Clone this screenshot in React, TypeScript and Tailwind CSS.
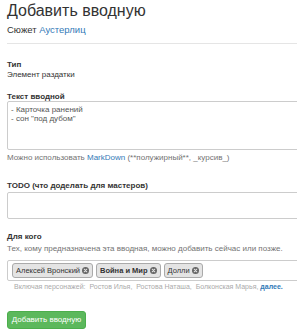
function CloseDot() {
  return (
    <svg width="7" height="7" viewBox="0 0 10 10" className="shrink-0">
      <circle cx="5" cy="5" r="5" fill="#666" />
      <path d="M3.2 3.2 L6.8 6.8 M6.8 3.2 L3.2 6.8" stroke="#e4e4e4" strokeWidth="1.5" strokeLinecap="round" />
    </svg>
  );
}

function Tag({ label, bold }: { label: string; bold?: boolean }) {
  return (
    <span className="flex items-center gap-[2px] h-[15px] px-[3px] bg-[#e4e4e4] border border-[#aaa] rounded-[3px] text-[7.5px] text-[#333] whitespace-nowrap">
      <span className={bold ? "font-bold" : ""}>{label}</span>
      <CloseDot />
    </span>
  );
}

export default function App() {
  return (
    <div className="w-[297px] h-[333px] overflow-hidden bg-white text-[#333] font-['Liberation_Sans',Arial,sans-serif]">
      <div className="w-[320px] px-[7px]">
        {/* заголовок */}
        <h1 className="text-[16px] leading-[20px] pt-[1px] font-normal text-[#333]">Добавить вводную</h1>
        <div className="mt-[3px] text-[9.5px] leading-[12px]">
          Сюжет <a className="text-[#337ab7]">Аустерлиц</a>
        </div>
        <div className="mt-[7px] border-t border-[#e5e5e5]" />

        {/* тип */}
        <div className="mt-[16px] text-[8px] leading-[10px] font-bold">Тип</div>
        <div className="text-[8px] leading-[10px]">Элемент раздатки</div>

        {/* текст */}
        <div className="mt-[12px] text-[8px] leading-[9px] font-bold">Текст вводной</div>
        <div className="h-[49px] border border-[#ccc] rounded-[2px] px-[3px] pt-[3px] text-[8px] leading-[9px] text-[#555]">
          <div>- Карточка ранений</div>
          <div>- сон "под дубом"</div>
        </div>
        <div className="mt-[3px] text-[8px] leading-[10px] text-[#737373]">
          Можно использовать <a className="text-[#337ab7]">MarkDown</a> (**полужирный**, _курсив_)
        </div>

        {/* todo */}
        <div className="mt-[18px] text-[8px] leading-[9px] font-bold">TODO (что доделать для мастеров)</div>
        <div className="mt-[2px] h-[27px] border border-[#ccc] rounded-[2px]" />

        {/* для кого */}
        <div className="mt-[13px] text-[8px] leading-[10px] font-bold">Для кого</div>
        <div className="mt-[2px] text-[8px] leading-[10px] text-[#737373]">
          Тех, кому предназначена эта вводная, можно добавить сейчас или позже.
        </div>
        <div className="mt-[6px] h-[21px] border border-[#ccc] rounded-[2px] flex items-center gap-[3px] px-[4px]">
          <Tag label="Алексей Вронский" />
          <Tag label="Война и Мир" bold />
          <Tag label="Долли" />
        </div>
        <div className="mt-[1px] pl-[7px] text-[7px] leading-[10px] text-[#aaa] whitespace-nowrap">
          Включая персонажей:&nbsp; Ростов Илья,&nbsp; Ростова Наташа,&nbsp; Болконская Марья,{" "}
          <a className="text-[#337ab7] font-bold">далее.</a>
        </div>

        {/* кнопка */}
        <button className="mt-[19px] h-[18px] w-[79px] rounded-[3px] bg-[#5cb85c] border border-[#4cae4c] text-white text-[8px] leading-[16px]">
          Добавить вводную
        </button>
      </div>
    </div>
  );
}
